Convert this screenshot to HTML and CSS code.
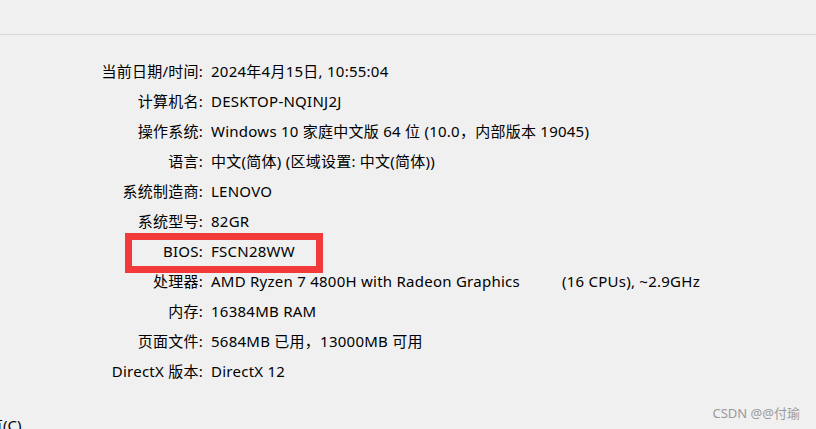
FILE: index.html
```html
<!DOCTYPE html>
<html lang="zh-CN">
<head>
<meta charset="utf-8">
<title>系统信息</title>
<link rel="stylesheet" href="styles.css">
</head>
<body>
<div class="page">
  <div class="header"></div>
  <div class="info">
    <div class="row"><span class="label">当前日期/时间:</span><span class="value">2024年4月15日, 10:55:04</span></div>
    <div class="row"><span class="label">计算机名:</span><span class="value">DESKTOP-NQINJ2J</span></div>
    <div class="row"><span class="label">操作系统:</span><span class="value">Windows 10 家庭中文版 64 位 (10.0，内部版本 19045)</span></div>
    <div class="row"><span class="label">语言:</span><span class="value">中文(简体) (区域设置: 中文(简体))</span></div>
    <div class="row"><span class="label">系统制造商:</span><span class="value">LENOVO</span></div>
    <div class="row"><span class="label">系统型号:</span><span class="value">82GR</span></div>
    <div class="row row-marked"><span class="label">BIOS:</span><span class="value">FSCN28WW</span><span class="mark"></span></div>
    <div class="row"><span class="label">处理器:</span><span class="value">AMD Ryzen 7 4800H with Radeon Graphics<span class="cpus">(16 CPUs), ~2.9GHz</span></span></div>
    <div class="row"><span class="label">内存:</span><span class="value">16384MB RAM</span></div>
    <div class="row"><span class="label">页面文件:</span><span class="value">5684MB 已用，13000MB 可用</span></div>
    <div class="row"><span class="label">DirectX 版本:</span><span class="value">DirectX 12</span></div>
  </div>
  <div class="footer">有(C)</div>
  <div class="watermark">CSDN @@付瑜</div>
</div>
</body>
</html>
```
FILE: styles.css
```css
html, body {
  margin: 0;
  padding: 0;
  background: #f0f0f0;
}
.page {
  position: relative;
  width: 816px;
  height: 429px;
  overflow: hidden;
  font-family: "Noto Sans", "Noto Sans CJK SC", sans-serif;
  font-size: 15px;
  color: #000;
}
.header {
  height: 34px;
  border-bottom: 1px solid #d9d9d9;
}
.info {
  padding-top: 21px;
}
.row {
  display: grid;
  grid-template-columns: 203px auto;
  column-gap: 8px;
  height: 30px;
  line-height: 30px;
  white-space: nowrap;
  letter-spacing: 0.25px;
}
.label {
  text-align: right;
}
.cpus {
  margin-left: 42px;
}
.row-marked {
  position: relative;
}
.mark {
  position: absolute;
  left: 125px;
  top: -3px;
  width: 184px;
  height: 26px;
  border: 7px solid #f23a3a;
}
.footer {
  margin-top: 24px;
  margin-left: -12px;
  line-height: 30px;
}
.watermark {
  position: absolute;
  right: 16px;
  bottom: 7px;
  font-size: 13px;
  color: #9a9a9a;
}
```
